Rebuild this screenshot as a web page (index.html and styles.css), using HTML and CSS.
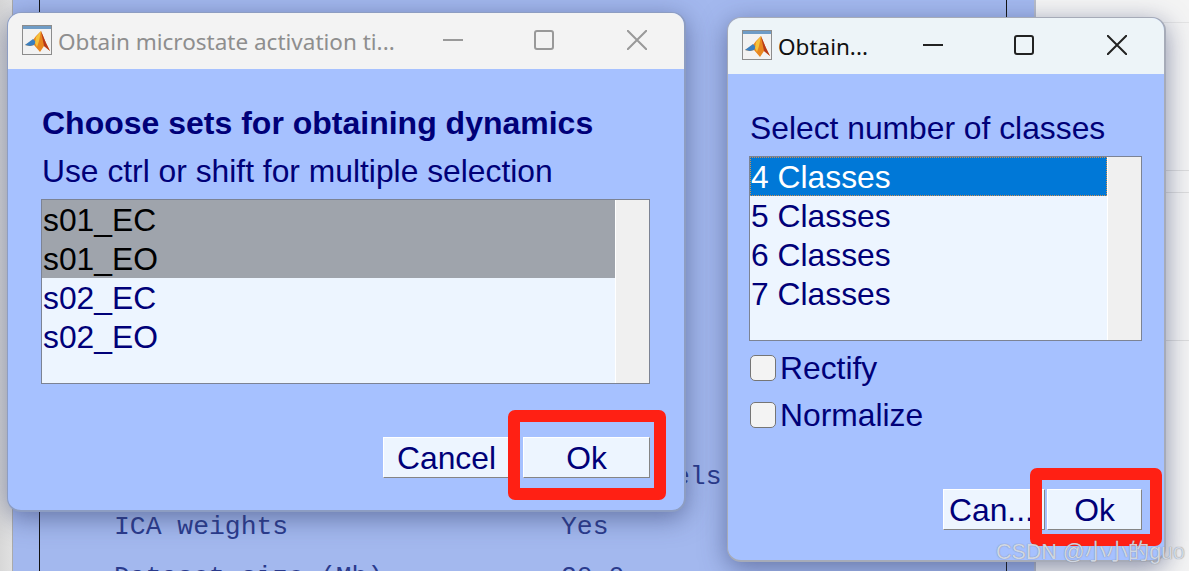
FILE: index.html
```html
<!DOCTYPE html>
<html lang="en">
<head>
<meta charset="utf-8">
<title>Microstate dialogs</title>
<link rel="stylesheet" href="styles.css">
</head>
<body>
<div class="desktop">
  <div class="backdrop">
    <div class="info-line info-a"><span class="info-val">els</span></div>
    <div class="info-line info-b"><span class="info-key">ICA weights</span><span>Yes</span></div>
    <div class="info-line info-c"><span class="info-key">Dataset size (Mb)</span><span>20.0</span></div>
  </div>
  <div class="rule rule-left"></div>
  <div class="rule rule-right"></div>

  <section class="window win-a">
    <header class="titlebar inactive">
      <svg class="app-icon" viewBox="0 0 30 30"><rect x=".5" y=".5" width="29" height="29" fill="#f2f2f2" stroke="#8c8c8c"/><rect x="1" y="1" width="28" height="3" fill="#6f9cc6"/><path d="M3 20 11 15 14 11 19 6 24 18 28 26 22 21 18 27 12 20 8 21Z" fill="#e8861f"/><path d="M3 20 11 14 14 17 12 20 8 21Z" fill="#3a7fc0"/><path d="M19 6 24 18 28 26 22 21Z" fill="#b8391a"/><path d="M14 12 19 6 17 16 15 22 13 18Z" fill="#f5c23c"/></svg>
      <span class="title-text">Obtain microstate activation ti...</span>
      <div class="caption-buttons">
        <svg class="cap cap-min" viewBox="0 0 20 20"><path d="M0 10H20" /></svg>
        <svg class="cap cap-max" viewBox="0 0 20 20"><rect x="1" y="1" width="18" height="18" rx="2"/></svg>
        <svg class="cap cap-close" viewBox="0 0 20 20"><path d="M0 0 20 20M20 0 0 20"/></svg>
      </div>
    </header>
    <div class="body body-a">
      <h1 class="heading">Choose sets for obtaining dynamics</h1>
      <p class="label label-a">Use ctrl or shift for multiple selection</p>
      <div class="listbox list-a">
        <ul class="rows">
          <li class="row picked">s01_EC</li>
          <li class="row picked">s01_EO</li>
          <li class="row">s02_EC</li>
          <li class="row">s02_EO</li>
        </ul>
        <div class="scroll"></div>
      </div>
      <div class="actions actions-a">
        <button class="btn btn-cancel-a">Cancel</button>
        <button class="btn btn-ok-a">Ok</button>
      </div>
    </div>
  </section>

  <section class="window win-b">
    <header class="titlebar active">
      <svg class="app-icon" viewBox="0 0 30 30"><rect x=".5" y=".5" width="29" height="29" fill="#f2f2f2" stroke="#8c8c8c"/><rect x="1" y="1" width="28" height="3" fill="#6f9cc6"/><path d="M3 20 11 15 14 11 19 6 24 18 28 26 22 21 18 27 12 20 8 21Z" fill="#e8861f"/><path d="M3 20 11 14 14 17 12 20 8 21Z" fill="#3a7fc0"/><path d="M19 6 24 18 28 26 22 21Z" fill="#b8391a"/><path d="M14 12 19 6 17 16 15 22 13 18Z" fill="#f5c23c"/></svg>
      <span class="title-text">Obtain...</span>
      <div class="caption-buttons">
        <svg class="cap cap-min" viewBox="0 0 20 20"><path d="M0 10H20" /></svg>
        <svg class="cap cap-max" viewBox="0 0 20 20"><rect x="1" y="1" width="18" height="18" rx="2"/></svg>
        <svg class="cap cap-close" viewBox="0 0 20 20"><path d="M0 0 20 20M20 0 0 20"/></svg>
      </div>
    </header>
    <div class="body body-b">
      <p class="label label-b">Select number of classes</p>
      <div class="listbox list-b">
        <ul class="rows">
          <li class="row current">4 Classes</li>
          <li class="row">5 Classes</li>
          <li class="row">6 Classes</li>
          <li class="row">7 Classes</li>
        </ul>
        <div class="scroll"></div>
      </div>
      <label class="check check-first"><span class="box"></span>Rectify</label>
      <label class="check"><span class="box"></span>Normalize</label>
      <div class="actions actions-b">
        <button class="btn btn-cancel-b">Can...</button>
        <button class="btn btn-ok-b">Ok</button>
      </div>
    </div>
  </section>

  <div class="mark mark-a"></div>
  <div class="mark mark-b"></div>
  <div class="watermark">CSDN @小小的guo</div>
</div>
</body>
</html>
```
FILE: styles.css
```css
* { box-sizing: border-box; }
html, body { margin: 0; padding: 0; }
body { width: 1189px; height: 571px; overflow: hidden; background: #ececec; }
.desktop {
  position: relative; width: 1189px; height: 571px; overflow: hidden;
  font-family: "Liberation Sans", Arial, sans-serif;
  background:
    linear-gradient(#e4e4e4 0 0) 1036px 22px / 153px 1px no-repeat,
    linear-gradient(#dcdcdc 0 0) 1165px 170px / 24px 1px no-repeat,
    linear-gradient(#dcdcdc 0 0) 1165px 192px / 24px 1px no-repeat,
    linear-gradient(#dcdcdc 0 0) 1165px 340px / 24px 1px no-repeat,
    linear-gradient(90deg, #d8d8d8, #f4f4f4 40px);
}
.backdrop {
  position: absolute; left: 12px; top: 0; width: 1024px; height: 571px;
  background: #a3b8ee; border-right: 2px solid #b7bcc9; border-left: 1px solid #aaa;
  font-family: "Liberation Mono", "Courier New", monospace;
  font-size: 26.4px; color: #2a3a8c;
}
.info-line { position: absolute; left: 101px; display: flex; white-space: pre; line-height: 30px; }
.info-key { width: 447px; }
.info-a { top: 462px; left: 661px; }
.info-b { top: 512px; }
.info-c { top: 562px; }
.rule { position: absolute; top: 0; width: 1px; height: 571px; background: #111; }
.rule-left { left: 39px; }
.rule-right { left: 1006px; }

.window {
  position: absolute; display: flex; flex-direction: column; overflow: hidden;
  background: #a6c1ff; border-radius: 14px;
  border: 1px solid #8d9dc2; box-shadow: 0 6px 26px rgba(50, 60, 105, .55);
}
.win-a { left: 7px; top: 12px; width: 679px; height: 500px; border-width: 1px 2px 2px 1px; }
.win-b { left: 727px; top: 17px; width: 439px; height: 545px; border-color: #a6abb8; border-width: 1px 2px 2px 1px; }
.titlebar { height: 56px; flex: none; display: flex; align-items: center; padding: 0 0 2px 14px; }
.titlebar.inactive { background: #f3f3f3; color: #8e8e8e; }
.titlebar.active { background: #edf4f8; color: #111; }
.app-icon { width: 30px; height: 30px; flex: none; }
.title-text { font-family: "Noto Sans", "Open Sans", sans-serif; font-size: 22.5px; margin: 2px 0 0 6px; white-space: nowrap; }
.caption-buttons { margin-left: auto; display: flex; align-items: center; gap: 71px; padding-right: 37px; }
.cap { width: 20px; height: 20px; fill: none; stroke: currentColor; stroke-width: 2; flex: none; }
.cap-close { margin-left: 2px; }
.inactive .cap { stroke: #999; }
.active .cap { stroke: #222; }

.body { flex: 1; display: flex; flex-direction: column; color: #000078; }
.body-a { padding: 37px 34px 32px 33px; }
.body-b { padding: 37px 22px 30px 21px; }
.heading { margin: 0 0 0 1px; font-size: 32px; line-height: 34px; font-weight: 700; }
.label { margin: 0 0 0 1px; font-size: 31.8px; line-height: 34px; }
.label-a { margin-top: 14px; }
.listbox { display: flex; background: #edf5ff; border: 1px solid #7c8394; flex: none; }
.list-a { margin-top: 11px; height: 185px; width: 609px; }
.list-b { margin-top: 11px; height: 185px; width: 393px; }
.rows { list-style: none; margin: 0; padding: 0; flex: 1; font-size: 31.8px; line-height: 41px; }
.row { height: 39px; padding-left: 1px; }
.row.picked { background: #9fa4ac; color: #000; }
.row.current { background: #0078d7; color: #fff; outline: 1px dotted #d09050; outline-offset: -1px; }
.scroll { width: 34px; flex: none; background: #f0f0f0; border-left: 1px solid #fff; }

.actions { margin-top: auto; display: flex; justify-content: flex-end; }
.actions-a { gap: 13px; }
.actions-b { gap: 2px; }
.btn {
  height: 41px; padding: 2px 0 0; font: inherit; font-size: 31.8px; color: #000078;
  background: #edf5ff; border: 1px solid; border-color: #fff #858585 #858585 #fff;
  border-radius: 0; overflow: hidden; white-space: nowrap;
}
.btn-cancel-a { width: 127px; }
.btn-ok-a { width: 127px; }
.btn-cancel-b { width: 102px; text-align: left; padding-left: 5px; }
.btn-ok-b { width: 95px; }

.check { display: flex; align-items: center; font-size: 31.8px; line-height: 34px; margin-top: 13px; margin-left: 1px; }
.check-first { margin-top: 10px; }
.box {
  width: 26px; height: 26px; flex: none; margin-right: 4px;
  background: #f3f3f3; border: 1px solid #757575; border-radius: 5px;
}

.mark { position: absolute; border: 12px solid #ff2014; border-radius: 7px; }
.mark-a { left: 508px; top: 410px; width: 158px; height: 90px; }
.mark-b { left: 1030px; top: 468px; width: 132px; height: 78px; }
.watermark {
  position: absolute; right: 4px; bottom: 6px; font-size: 21.5px; line-height: 26px; white-space: nowrap;
  font-family: "Liberation Sans", "Noto Sans CJK SC", sans-serif;
  color: rgba(225, 232, 245, .85); text-shadow: 0 0 1px rgba(90,90,90,.8);
}
```
